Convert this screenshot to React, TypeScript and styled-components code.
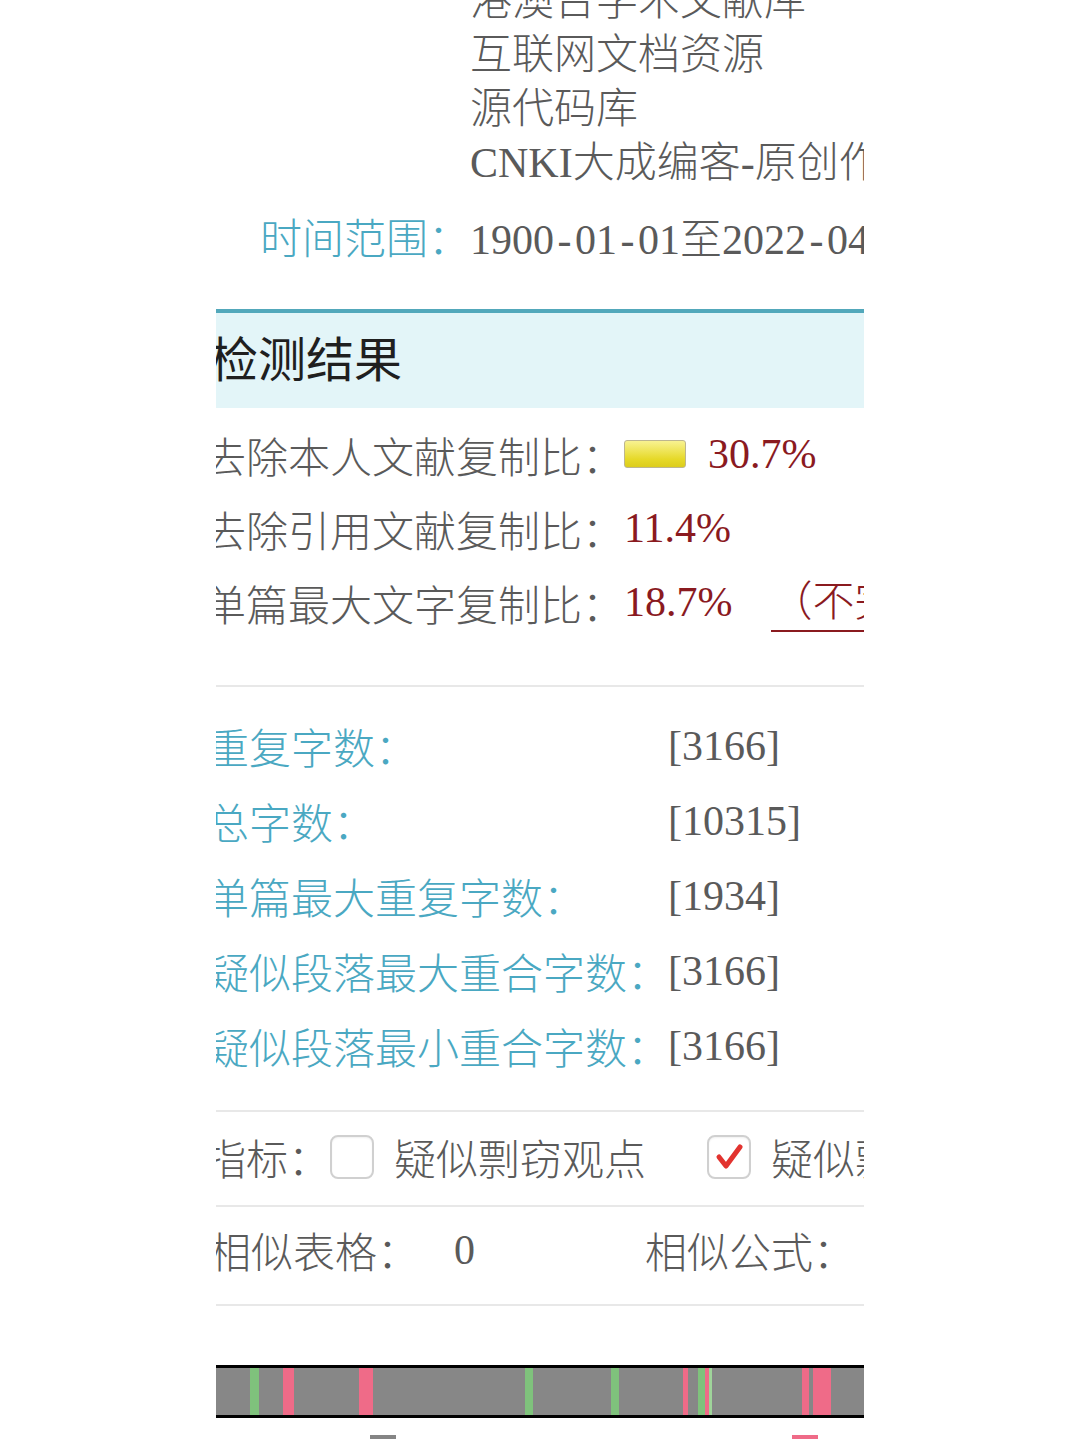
import React from "react";
import styled, { createGlobalStyle } from "styled-components";

const FONT = `"Liberation Serif", "Noto Sans CJK SC", serif`;

const GlobalStyle = createGlobalStyle`
  html, body { margin: 0; padding: 0; background: #ffffff; }
  body { font-family: ${FONT}; }
`;

const Page = styled.div`
  width: 1080px;
  height: 1439px;
  overflow: hidden;
  background: #ffffff;
  display: flex;
  justify-content: center;
  align-items: flex-start;
`;

const Column = styled.main`
  width: 648px;
  overflow: hidden;
  display: flex;
  flex-direction: column;
  font-family: ${FONT};
  font-size: 42px;
  font-weight: 300;
  white-space: nowrap;

  & > * {
    flex-shrink: 0;
  }
`;

const InfoGrid = styled.section`
  display: grid;
  grid-template-columns: 254px 1fr;
  row-gap: 23px;
  margin-top: -26px;
`;

const InfoLabel = styled.div`
  text-align: right;
  color: #4aa8c2;
  line-height: 54px;
`;

const InfoValue = styled.div`
  color: #5a5a5a;
  line-height: 54px;
`;

const SourceLine = styled.div`
  height: 54px;
`;

const Dash = styled.span`
  display: inline-block;
  width: 0.5em;
  text-align: center;
`;

const ResultHeader = styled.header`
  margin-top: 42px;
  border-top: 4px solid #52a8bb;
  background: #e3f5f8;
  height: 95px;
  display: flex;
  align-items: center;
`;

const ResultTitle = styled.h2`
  margin: 0 0 0 -6px;
  font-family: ${FONT};
  font-size: 48px;
  font-weight: 400;
  line-height: 1;
  color: #1f1f1f;
`;

const RatioList = styled.section`
  padding: 9px 0 2px;
  display: flex;
  flex-direction: column;
`;

const RatioRow = styled.div`
  height: 74px;
  display: flex;
  align-items: center;
  margin-left: -12px;
  color: #5a5a5a;
`;

const RatioValue = styled.span`
  color: #8a1a1f;
`;

const Meter = styled.span`
  display: inline-block;
  width: 62px;
  height: 28px;
  box-sizing: border-box;
  border: 1px solid #bdb68f;
  border-radius: 3px;
  background: linear-gradient(#f8f291, #e6d928 70%, #dccd1c);
  margin-right: 22px;
`;

const SourceLink = styled.span`
  display: inline-block;
  margin-left: 38px;
  padding: 8px 0 7px;
  line-height: 42px;
  color: #8a1a1f;
  border-bottom: 2px solid #8a1a1f;
`;

const Divider = styled.hr`
  margin: 0;
  border: 0;
  height: 2px;
  background: #e8e8e8;
  flex-shrink: 0;
`;

const RatioDivider = styled(Divider)`
  margin-top: 44px;
`;

const CountList = styled.section`
  padding: 21px 0 27px;
  display: flex;
  flex-direction: column;
`;

const CountRow = styled.div`
  height: 75px;
  display: grid;
  grid-template-columns: 461px auto;
  align-items: center;
  margin-left: -9px;
`;

const CountLabel = styled.span`
  color: #4aa8c2;
`;

const CountValue = styled.span`
  color: #5a5a5a;
`;

const IndicatorRow = styled.div`
  height: 93px;
  box-sizing: border-box;
  padding-bottom: 4px;
  display: flex;
  align-items: center;
  margin-left: -12px;
  color: #5a5a5a;
`;

const CheckBox = styled.span`
  width: 44px;
  height: 44px;
  box-sizing: border-box;
  border: 2px solid #d0d0d0;
  border-radius: 8px;
  background: #ffffff;
  box-shadow: inset 0 1px 2px rgba(0, 0, 0, 0.06);
  display: inline-flex;
  align-items: center;
  justify-content: center;
  flex-shrink: 0;
  margin-right: 20px;
`;

const OptionText = styled.span<{ $gap?: number }>`
  margin-right: ${(p) => p.$gap ?? 0}px;
`;

const SimilarRow = styled.div`
  height: 97px;
  box-sizing: border-box;
  padding-bottom: 12px;
  display: flex;
  align-items: center;
  margin-left: -7px;
  color: #5a5a5a;
`;

const StatGroup = styled.div<{ $width?: number }>`
  display: flex;
  align-items: center;
  flex-shrink: 0;
  width: ${(p) => (p.$width ? `${p.$width}px` : "auto")};
`;

const StatValue = styled.span`
  margin-left: 35px;
`;

const Track = styled.div`
  margin-top: 59px;
  height: 47px;
  border-top: 3px solid #000000;
  border-bottom: 3px solid #000000;
  background: #878787;
  position: relative;
`;

const Mark = styled.span<{ $color: string }>`
  position: absolute;
  top: 0;
  bottom: 0;
  background: ${(p) => p.$color};
`;

const Legend = styled.div`
  margin-top: 17px;
  display: flex;
  padding-left: 154px;
`;

const Swatch = styled.span<{ $color: string; $gap?: number }>`
  width: 26px;
  height: 14px;
  background: ${(p) => p.$color};
  margin-left: ${(p) => p.$gap ?? 0}px;
`;

const GREEN = "#7fc27c";
const PINK = "#ef6b88";

const marks: Array<[number, number, string]> = [
  [34, 9, GREEN],
  [67, 11, PINK],
  [143, 14, PINK],
  [309, 8, GREEN],
  [395, 8, GREEN],
  [467, 5, PINK],
  [482, 7, GREEN],
  [489, 4, PINK],
  [493, 3, "#9fd49a"],
  [586, 7, PINK],
  [597, 18, PINK],
];

const sources = ["港澳台学术文献库", "互联网文档资源", "源代码库", "CNKI大成编客-原创作品库"];

const counts: Array<[string, string]> = [
  ["重复字数：", "[3166]"],
  ["总字数：", "[10315]"],
  ["单篇最大重复字数：", "[1934]"],
  ["疑似段落最大重合字数：", "[3166]"],
  ["疑似段落最小重合字数：", "[3166]"],
];

const CheckMark = () => (
  <svg width="30" height="30" viewBox="0 0 30 30">
    <path d="M5 15 L12 24 L26 5" fill="none" stroke="#e2332f" strokeWidth="5" strokeLinecap="round" strokeLinejoin="round" />
  </svg>
);

export default function App() {
  return (
    <>
      <GlobalStyle />
      <Page>
        <Column>
          <InfoGrid>
            <InfoLabel />
            <InfoValue>
              {sources.map((s) => (
                <SourceLine key={s}>{s}</SourceLine>
              ))}
            </InfoValue>
            <InfoLabel>时间范围：</InfoLabel>
            <InfoValue>
              1900<Dash>-</Dash>01<Dash>-</Dash>01至2022<Dash>-</Dash>04<Dash>-</Dash>18
            </InfoValue>
          </InfoGrid>

          <ResultHeader>
            <ResultTitle>检测结果</ResultTitle>
          </ResultHeader>

          <RatioList>
            <RatioRow>
              去除本人文献复制比：<Meter />
              <RatioValue>30.7%</RatioValue>
            </RatioRow>
            <RatioRow>
              去除引用文献复制比：<RatioValue>11.4%</RatioValue>
            </RatioRow>
            <RatioRow>
              单篇最大文字复制比：<RatioValue>18.7%</RatioValue>
              <SourceLink>（不完全统计）</SourceLink>
            </RatioRow>
          </RatioList>

          <RatioDivider />

          <CountList>
            {counts.map(([label, value]) => (
              <CountRow key={label}>
                <CountLabel>{label}</CountLabel>
                <CountValue>{value}</CountValue>
              </CountRow>
            ))}
          </CountList>

          <Divider />

          <IndicatorRow>
            <span>指标：</span>
            <CheckBox />
            <OptionText $gap={61}>疑似剽窃观点</OptionText>
            <CheckBox>
              <CheckMark />
            </CheckBox>
            <OptionText>疑似剽窃文字表述</OptionText>
          </IndicatorRow>

          <Divider />

          <SimilarRow>
            <StatGroup $width={436}>
              相似表格：<StatValue>0</StatValue>
            </StatGroup>
            <StatGroup>
              相似公式：<StatValue>0</StatValue>
            </StatGroup>
          </SimilarRow>

          <Divider />

          <Track>
            {marks.map(([left, width, color], i) => (
              <Mark key={i} $color={color} style={{ left, width }} />
            ))}
          </Track>

          <Legend>
            <Swatch $color="#858585" />
            <Swatch $color={PINK} $gap={396} />
          </Legend>
        </Column>
      </Page>
    </>
  );
}
